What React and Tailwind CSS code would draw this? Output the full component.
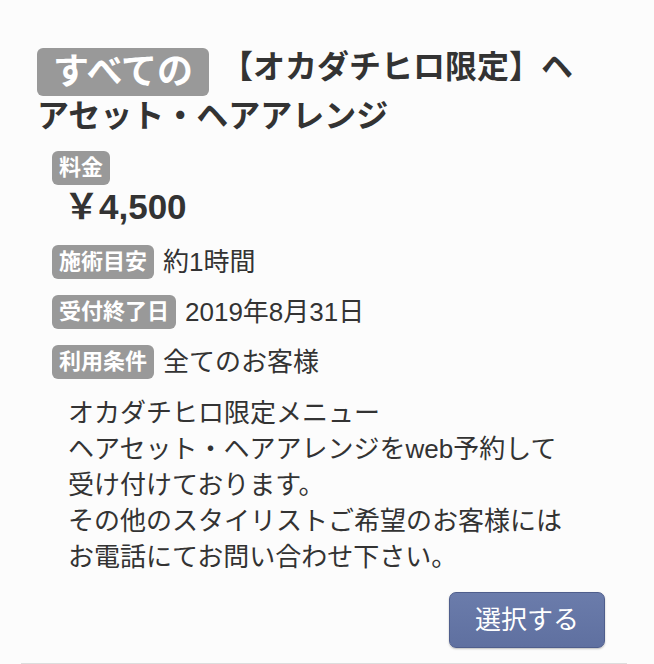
import React from "react";

const font = { fontFamily: '"Liberation Sans", "Noto Sans CJK JP", sans-serif' };

function Label({ children }) {
  return (
    <span className="inline-block rounded-[6px] bg-[#999999] px-[7px] text-[22px] font-bold leading-[34px] text-white">
      {children}
    </span>
  );
}

function Row({ label, value }) {
  return (
    <div className="flex items-center gap-[9px]">
      <Label>{label}</Label>
      <span className="text-[26px] leading-[34px] text-[#333333]">{value}</span>
    </div>
  );
}

export default function App() {
  return (
    <div
      className="h-[664px] w-[654px] overflow-hidden bg-[#fcfcfc] pl-[21px] pr-[27px]"
      style={font}
    >
      <div className="border-b-2 border-[#dddddd] pb-[15px] pl-[16px] pr-[22px] pt-[47px]">
        <h1 className="pr-[8px] text-[32px] font-bold leading-[40px] text-[#333333]">
          <span className="mr-[12px] inline-block rounded-[6px] bg-[#999999] px-[16px] align-[-6px] text-[36px] font-bold leading-[48px] text-white">
            すべての
          </span>
          【オカダチヒロ限定】ヘアセット・ヘアアレンジ
        </h1>

        <div className="mt-[15px] pl-[15px]">
          <Label>料金</Label>
          <div className="ml-[12px] mt-[2px] text-[35px] font-bold leading-[40px] text-[#333333]">
            ￥4,500
          </div>
          <div className="mt-[18px] flex flex-col gap-[16px]">
            <Row label="施術目安" value="約1時間" />
            <Row label="受付終了日" value="2019年8月31日" />
            <Row label="利用条件" value="全てのお客様" />
          </div>
          <div className="mt-[16px] pl-[16px] text-[26px] leading-[36px] text-[#333333]">
            <div className="whitespace-nowrap">オカダチヒロ限定メニュー</div>
            <div className="whitespace-nowrap">ヘアセット・ヘアアレンジをweb予約して</div>
            <div className="whitespace-nowrap">受け付けております。</div>
            <div className="whitespace-nowrap">その他のスタイリストご希望のお客様には</div>
            <div className="whitespace-nowrap">お電話にてお問い合わせ下さい。</div>
          </div>
        </div>

        <div className="mt-[17px] flex justify-end">
          <button className="h-[56px] w-[156px] rounded-[7px] border border-[#4f5e8c] bg-gradient-to-b from-[#6b7cab] to-[#5f70a0] text-[26px] text-white shadow-[0_1px_2px_rgba(0,0,0,0.25)]">
            選択する
          </button>
        </div>
      </div>
    </div>
  );
}
